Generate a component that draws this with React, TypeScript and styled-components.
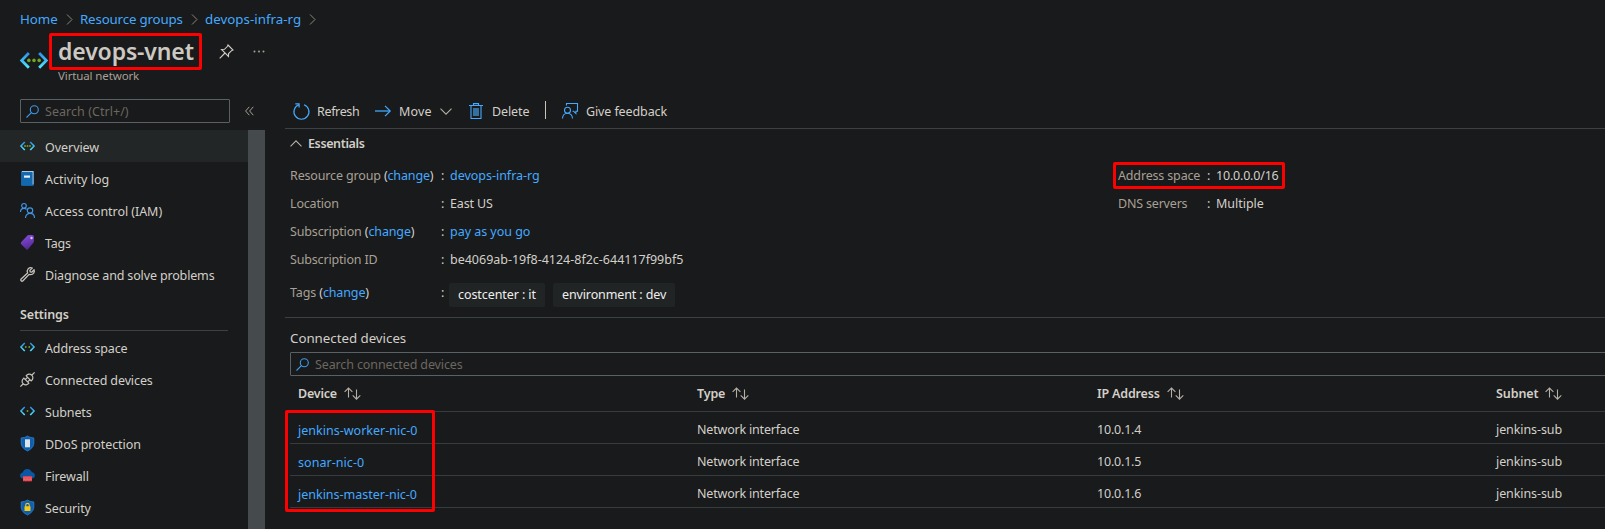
import React from "react";
import styled, { createGlobalStyle, css } from "styled-components";

const GlobalStyle = createGlobalStyle`
  * { box-sizing: border-box; }
  html, body { margin: 0; background: #181a1b; overflow: hidden; }
  body {
    font-family: "Noto Sans", "Open Sans", sans-serif;
    font-size: 12.5px;
    color: #d3cfc9;
  }
  svg { display: block; flex: none; overflow: visible; }
`;

const LINK = "#45a9ff";
const MUTED = "#a8a095";
const TRACKING = -0.05;

const Page = styled.div`
  width: 100%;
  height: 529px;
  display: flex;
  flex-direction: column;
  overflow: hidden;
  background: #181a1b;
`;

const Txt = styled.span<{ $ls?: number }>`
  white-space: nowrap;
  letter-spacing: ${(p) => (p.$ls ?? 0) + TRACKING}px;
`;

const Link = styled.a<{ $ls?: number }>`
  color: ${LINK};
  text-decoration: none;
  white-space: nowrap;
  letter-spacing: ${(p) => (p.$ls ?? 0) + TRACKING}px;
`;

const Highlight = styled.span<{ $t: number; $r: number; $b: number; $l: number }>`
  position: absolute;
  top: ${(p) => -p.$t}px;
  right: ${(p) => -p.$r}px;
  bottom: ${(p) => -p.$b}px;
  left: ${(p) => -p.$l}px;
  border: 3px solid #fe0000;
  border-radius: 2px;
  pointer-events: none;
`;

/* Header */
const Breadcrumb = styled.nav`
  display: flex;
  align-items: center;
  height: 29px;
  padding: 9px 0 0 20px;
  font-size: 13.3px;
  line-height: 20px;
`;

const Crumb = styled.span<{ $w: number }>`
  display: flex;
  align-items: center;
  justify-content: space-between;
  width: ${(p) => p.$w}px;
  margin-right: 7px;
`;

const TitleBar = styled.header`
  display: flex;
  height: 61px;
  padding: 4px 0 0 20px;
`;

const TitleIcon = styled.div`
  width: 38px;
  padding-top: 18px;
`;

const TitleLine = styled.div`
  display: flex;
  align-items: center;
  height: 36px;
`;

const Title = styled.h1`
  position: relative;
  margin: 0;
  width: 136px;
  font-size: 23px;
  font-weight: 600;
  line-height: 36px;
  letter-spacing: -0.13px;
  white-space: nowrap;
  color: #cdc8c2;
`;

const TitleActions = styled.div`
  display: flex;
  align-items: center;
  gap: 19px;
  padding: 1px 0 0 25px;
`;

const Subtitle = styled.div`
  font-size: 11.5px;
  line-height: 14px;
  color: ${MUTED};
`;

/* Body */
const Body = styled.div`
  display: flex;
  flex: 1;
  min-height: 0;
`;

const Sidebar = styled.aside`
  display: flex;
  flex-direction: column;
  width: 265px;
  flex: none;
`;

const SidebarTop = styled.div`
  display: flex;
  gap: 15px;
  height: 40px;
  padding: 9px 0 0 20px;
`;

const SearchBox = styled.div<{ $w?: number }>`
  display: flex;
  align-items: center;
  gap: 6px;
  height: 24px;
  width: ${(p) => (p.$w ? `${p.$w}px` : "auto")};
  padding-left: 5px;
  border: 1px solid #5a6164;
  border-radius: 1px;
  color: #6d675f;
  & > span { padding-top: 1px; line-height: 17px; }
`;

const Collapse = styled.div`
  padding-top: 7px;
`;

const MenuArea = styled.div`
  display: flex;
  flex: 1;
  min-height: 0;
`;

const Menu = styled.div`
  width: 248px;
`;

const Scrollbar = styled.div`
  width: 17px;
  background: #454a4d;
`;

const MenuItem = styled.div<{ $active?: boolean }>`
  display: flex;
  align-items: center;
  gap: 10px;
  height: 32px;
  padding: 2px 0 0 20px;
  color: #d3cfc9;
  ${(p) => p.$active && css`background: #222627;`}
  & > svg { margin-top: -1px; }
`;

const MenuHeading = styled.div`
  height: 41px;
  width: 208px;
  margin-left: 20px;
  padding-top: 15px;
  border-bottom: 1px solid #3c4144;
  font-weight: 600;
  line-height: 19px;
`;

const Main = styled.main`
  flex: 1;
  min-width: 0;
  padding-left: 20px;
`;

const Toolbar = styled.div`
  display: flex;
  align-items: center;
  height: 39px;
  padding: 4px 0 0 8px;
  border-bottom: 1px solid #3c4144;
`;

const Command = styled.div<{ $w: number; $gap: number }>`
  display: flex;
  align-items: center;
  gap: ${(p) => p.$gap}px;
  width: ${(p) => p.$w}px;
`;

const Separator = styled.span`
  width: 1px;
  height: 18px;
  margin: -2px 16px 0 0;
  background: #c8c3bc;
`;

const EssentialsHead = styled.div`
  display: flex;
  align-items: center;
  gap: 6px;
  height: 28px;
  padding-left: 5px;
  font-weight: 600;
`;

const Essentials = styled.section`
  display: grid;
  grid-template-columns: 828px 1fr;
  height: 161px;
  padding: 4px 0 0 5px;
  border-bottom: 1px solid #3c4144;
`;

const Prop = styled.div<{ $w: number; $h?: number }>`
  position: relative;
  display: grid;
  grid-template-columns: ${(p) => p.$w}px 9px max-content;
  align-items: center;
  width: max-content;
  height: ${(p) => p.$h ?? 28}px;
`;

const PropLabel = styled.span<{ $ls?: number }>`
  color: ${MUTED};
  white-space: nowrap;
  letter-spacing: ${(p) => (p.$ls ?? 0) + TRACKING}px;
`;

const Paren = styled.span`
  color: #d3cfc9;
`;

const TagsProp = styled(Prop)`
  height: 38px;
  align-items: start;
  padding-top: 10px;
  & > span { padding-top: 1px; line-height: 18px; }
`;

const Chips = styled.div`
  display: flex;
  gap: 8px;
  margin-left: -1px;
`;

const Chip = styled.div<{ $w: number }>`
  width: ${(p) => p.$w}px;
  height: 24px;
  padding-left: 9px;
  border-radius: 2px;
  background: #202425;
  line-height: 24px;
  color: #f0eeeb;
`;

const Devices = styled.section`
  padding: 10px 0 0 5px;
`;

const DevicesTitle = styled.div`
  height: 24px;
  font-size: 13.3px;
  line-height: 20px;
`;

const DeviceSearch = styled(SearchBox)`
  margin-right: -4px;
`;

const Row = styled.div`
  display: grid;
  grid-template-columns: 399px 400px 399px 1fr;
  align-items: start;
  height: 32px;
  padding: 8px 0 0 8px;
  border-bottom: 1px solid #363b3d;
`;

const HeadRow = styled(Row)`
  height: 36px;
  font-weight: 600;
`;

const HeadCell = styled.div`
  display: flex;
  align-items: center;
  gap: 7px;
  height: 19px;
`;

const Cell = styled.div<{ $drop?: boolean }>`
  padding-top: ${(p) => (p.$drop ? 2 : 1)}px;
  line-height: 17px;
`;

const TableBody = styled.div`
  position: relative;
`;

/* Spans the first column only, over the row borders */
const DeviceLinksHighlight = styled.span`
  position: absolute;
  top: -2px;
  bottom: -4px;
  left: -5px;
  width: 150px;
  border: 3px solid #fe0000;
  border-radius: 2px;
  pointer-events: none;
`;

/* Icons */
const CrumbChevron = () => (
  <svg width="7" height="11" viewBox="0 0 7 11" fill="none" stroke="#8d857a" strokeWidth="1">
    <path d="M1 .5l5 5-5 5" />
  </svg>
);

const Network = ({ size, dots }: { size: number; dots: number[] }) => (
  <svg width={size} height={size * 0.67} viewBox="0 0 30 20" fill="none">
    <defs>
      <linearGradient id="net" x1="0" y1="0" x2="0" y2="1">
        <stop offset="0" stopColor="#2f8fe8" />
        <stop offset="1" stopColor="#50e6ff" />
      </linearGradient>
    </defs>
    <path d="M9.500 2L1.800 10l7.700 8M20.500 2l7.700 8-7.700 8" stroke="url(#net)" strokeWidth="3" />
    {dots.map((x) => (
      <circle key={x} cx={x} cy="10" r="1.900" fill="#6fa524" />
    ))}
  </svg>
);

const Pin = () => (
  <svg width="15" height="15" viewBox="0 0 15 15" fill="none" stroke="#d3cfc9" strokeWidth="1.100">
    <path d="M9 1l5 5-1.400.600-3 3L9.500 12.500 2.500 5.500l3-.200 3-3z" />
    <path d="M6 9L.700 14.300" />
  </svg>
);

const Dots = () => (
  <svg width="13" height="3" viewBox="0 0 13 3" fill="#a8a095">
    <circle cx="1.500" cy="1.500" r="1" />
    <circle cx="6" cy="1.500" r="1" />
    <circle cx="10.500" cy="1.500" r="1" />
  </svg>
);

const Magnifier = () => (
  <svg width="13" height="13" viewBox="0 0 13 13" fill="none" stroke="#3f9ae8" strokeWidth="1.100">
    <circle cx="8.300" cy="4.700" r="4" />
    <path d="M5.400 7.600L.500 12.500" />
  </svg>
);

const DoubleChevron = () => (
  <svg width="9" height="10" viewBox="0 0 9 10" fill="none" stroke="#a8a095" strokeWidth="1">
    <path d="M4.300 .8L.6 5l3.700 4.200M8.300.8L4.600 5l3.700 4.200" />
  </svg>
);

const LogBook = () => (
  <svg width="15" height="15" viewBox="0 0 15 15">
    <path d="M1.500 0H13.500v15H2.500A1.500 1.500 0 0 1 1 13.500V.5z" fill="#0f62a8" />
    <path d="M2 .6h11V13.500" stroke="#a9cde9" strokeWidth="1.200" fill="none" />
    <path d="M1.500 1.200h10.800V14.200H1.500z" fill="#1468ae" />
    <rect x="4" y="4.500" width="6" height="2.200" fill="#e6f0f8" />
  </svg>
);

const People = () => (
  <svg width="15" height="15" viewBox="0 0 15 15" fill="none" stroke="#3f94e4" strokeWidth="1.200">
    <circle cx="4" cy="2.800" r="2.300" />
    <path d="M.5 9C.5 6.600 2 5.300 4 5.300c1.200 0 2 .4 2.600 1" />
    <circle cx="10" cy="7.500" r="2.700" />
    <path d="M5.500 15c0-2.800 1.900-4.700 4.500-4.700s4.500 1.900 4.500 4.700" />
  </svg>
);

const TagIcon = () => (
  <svg width="15" height="15" viewBox="0 0 15 15">
    <defs>
      <linearGradient id="tag" x1="0" y1="0" x2=".3" y2="1">
        <stop offset="0" stopColor="#8a4fe0" />
        <stop offset="1" stopColor="#552a96" />
      </linearGradient>
    </defs>
    <path d="M1.300 7L7 .9Q7.700.2 8.700.1L12 0q1.900.1 2 2l-.1 4.200q0 1-.7 1.700L8 14.300q-.7.800-1.500.100L1.200 9.300q-1-1.100.1-2.300z" fill="url(#tag)" />
    <circle cx="11.500" cy="3" r="1.200" fill="#d9c8f7" />
  </svg>
);

const Wrench = () => (
  <svg width="15" height="15" viewBox="0 0 15 15" fill="none" stroke="#c8c3bc" strokeWidth="1.300" strokeLinejoin="round">
    <path d="M12.300 1L9.900 3.400l.3 1.500 1.500.3L14.100 2.800c.8 2-.5 4.900-3.600 4.900-.6 0-1-.1-1.400-.3L3 13.800c-1.300 1.200-3-.5-1.900-1.800L7.600 6C6.200 3 8.900-.4 12.300 1z" />
  </svg>
);

const Plug = () => (
  <svg width="15" height="15" viewBox="0 0 15 15" fill="none" stroke="#c8c3bc" strokeWidth="1.200">
    <path d="M.4 14.600l2.600-2.600M12 3l2.600-2.600M3.200 11.800c-1.800-1.900-1.300-4.100.6-5.700l5.100 5.100c-1.600 1.900-3.800 2.400-5.700.6zM11.800 3.200c1.800 1.900 1.300 4.100-.6 5.700L6.100 3.800c1.600-1.900 3.800-2.400 5.700-.6zM5.300 7.500l1.900-1.900M7.700 9.900l1.900-1.900" />
  </svg>
);

const SHIELD = "M7.500 0c1.800 1.300 3.800 1.800 6.300 1.900v5c0 4-3 6.300-6.300 8.100C4.200 13.200 1.200 10.900 1.200 6.900v-5C3.700 1.800 5.700 1.300 7.500 0z";

const Shield = ({ children }: { children: React.ReactNode }) => (
  <svg width="15" height="15" viewBox="0 0 15 15">
    <path d={SHIELD} fill="#0f5fae" />
    <path d={SHIELD} fill="none" stroke="#2b86d8" strokeWidth=".8" />
    {children}
  </svg>
);

const FirewallIcon = () => (
  <svg width="15" height="15" viewBox="0 0 15 15">
    <path d="M3.300 10.500A3 3 0 0 1 .1 7.600c0-1.700 1.200-2.800 2.700-3C3.100 2.500 5 .9 7.300.9c2.300 0 4 1.300 4.600 3.400 1.800.2 3 1.400 3 3.100s-1.300 3.100-3.300 3.100z" fill="#0c57a4" />
    <rect x="3" y="8.200" width="9" height="5.100" fill="#e8404c" />
    <path d="M3 9.900h9M3 11.600h9M6 8.300v1.600M9 8.300v1.600M4.500 9.900v1.700M7.500 9.900v1.700M10.500 9.900v1.700M6 11.600v1.700M9 11.600v1.700" stroke="#f3858c" strokeWidth=".4" />
  </svg>
);

const Refresh = () => (
  <svg width="17" height="17" viewBox="0 0 17 17" fill="none" stroke={LINK} strokeWidth="1.200">
    <path d="M11 1.700A7.500 7.500 0 1 1 5.900 1.700" />
    <path d="M2.300.8h3.800v3.800" />
  </svg>
);

const ArrowRight = () => (
  <svg width="16" height="12" viewBox="0 0 16 12" fill="none" stroke={LINK} strokeWidth="1.200">
    <path d="M0 6h15" stroke="#3583bf" strokeWidth="1.800" />
    <path d="M10 .8L15.200 6 10 11.200" />
  </svg>
);

const Chevron = ({ up }: { up?: boolean }) => (
  <svg width="12" height="7" viewBox="0 0 12 7" fill="none" stroke="#b5afa5" strokeWidth="1.100">
    <path d={up ? "M.5 6.400L6 .8l5.500 5.600" : "M.5.6L6 6.200 11.500.6"} />
  </svg>
);

const Trash = () => (
  <svg width="14" height="16" viewBox="0 0 14 16" fill="none" stroke={LINK} strokeWidth="1.100">
    <path d="M2 2.500v13h10v-13" />
    <path d="M0 2.500h14M4.500 2.500V.6h5v1.900" />
    <rect x="4" y="5" width="6" height="8" fill="#34709f" stroke="none" />
  </svg>
);

const Feedback = () => (
  <svg width="16" height="16" viewBox="0 0 16 16" fill="none" stroke={LINK} strokeWidth="1.100">
    <circle cx="5.500" cy="7.200" r="3" />
    <path d="M.5 15.500c0-3.100 2.200-5.300 5-5.300s5 2.200 5 5.300M4.500 2.500v-2h11v7.700h-1.600v2.300l-2.400-2.300H10.500" />
  </svg>
);

const Sort = () => (
  <svg width="17" height="13" viewBox="0 0 17 13" fill="none" stroke="#b5afa5" strokeWidth="1.100">
    <path d="M4.500 10.500V1M.6 4.800L4.500 1l3.900 3.800M12.500 2.500V12M8.700 8.300l3.800 3.800 3.800-3.800" />
  </svg>
);

const general = [
  { label: "Overview", ls: 0, icon: <Network size={15} dots={[10, 15, 20]} />, active: true },
  { label: "Activity log", ls: 0.08, icon: <LogBook /> },
  { label: "Access control (IAM)", ls: 0, icon: <People /> },
  { label: "Tags", ls: -0.15, icon: <TagIcon /> },
  { label: "Diagnose and solve problems", ls: -0.1, icon: <Wrench /> },
];

const settings = [
  { label: "Address space", ls: -0.09, icon: <Network size={15} dots={[11.5, 18.5]} /> },
  { label: "Connected devices", ls: -0.06, icon: <Plug /> },
  { label: "Subnets", ls: -0.1, icon: <Network size={15} dots={[15]} /> },
  {
    label: "DDoS protection",
    ls: 0,
    icon: (
      <Shield>
        <rect x="5" y="3.300" width="5" height="8" fill="#dce3ea" />
      </Shield>
    ),
  },
  { label: "Firewall", ls: -0.06, icon: <FirewallIcon /> },
  {
    label: "Security",
    ls: -0.09,
    icon: (
      <Shield>
        <path d="M5.700 7V5.200a1.800 1.800 0 0 1 3.600 0V7" fill="none" stroke="#f0c419" strokeWidth="1.100" />
        <rect x="4.500" y="6.300" width="6" height="4.700" rx=".5" fill="#f5c914" />
      </Shield>
    ),
  },
];

const columns = [
  { label: "Device", ls: -0.15 },
  { label: "Type", ls: -0.1 },
  { label: "IP Address", ls: -0.12 },
  { label: "Subnet", ls: -0.05 },
];

const devices = [
  { name: "jenkins-worker-nic-0", ls: 0.06, ip: "10.0.1.4" },
  { name: "sonar-nic-0", ls: 0.1, ip: "10.0.1.5" },
  { name: "jenkins-master-nic-0", ls: 0.04, ip: "10.0.1.6" },
];

const ChangeLabel = ({ label, ls }: { label: string; ls: number }) => (
  <PropLabel $ls={ls}>
    {label} <Paren>(</Paren><Link $ls={ls}>change</Link><Paren>)</Paren>
  </PropLabel>
);

export default function App() {
  return (
    <Page>
      <GlobalStyle />
      <Breadcrumb>
        <Crumb $w={53}><Link>Home</Link><CrumbChevron /></Crumb>
        <Crumb $w={118}><Link $ls={-0.11}>Resource groups</Link><CrumbChevron /></Crumb>
        <Crumb $w={111}><Link $ls={0.08}>devops-infra-rg</Link><CrumbChevron /></Crumb>
      </Breadcrumb>
      <TitleBar>
        <TitleIcon><Network size={28} dots={[9.5, 15, 20.5]} /></TitleIcon>
        <div>
          <TitleLine>
            <Title>
              devops-vnet
              <Highlight $t={0} $r={8} $b={1} $l={9} />
            </Title>
            <TitleActions><Pin /><Dots /></TitleActions>
          </TitleLine>
          <Subtitle><Txt $ls={-0.07}>Virtual network</Txt></Subtitle>
        </div>
      </TitleBar>
      <Body>
        <Sidebar>
          <SidebarTop>
            <SearchBox $w={210}><Magnifier /><Txt $ls={0.1}>Search (Ctrl+/)</Txt></SearchBox>
            <Collapse><DoubleChevron /></Collapse>
          </SidebarTop>
          <MenuArea>
            <Menu>
              {general.map((m) => (
                <MenuItem key={m.label} $active={m.active}>{m.icon}<Txt $ls={m.ls}>{m.label}</Txt></MenuItem>
              ))}
              <MenuHeading><Txt $ls={-0.1}>Settings</Txt></MenuHeading>
              {settings.map((m) => (
                <MenuItem key={m.label}>{m.icon}<Txt $ls={m.ls}>{m.label}</Txt></MenuItem>
              ))}
            </Menu>
            <Scrollbar />
          </MenuArea>
        </Sidebar>
        <Main>
          <Toolbar>
            <Command $w={82} $gap={7}><Refresh /><Txt $ls={-0.3}>Refresh</Txt></Command>
            <Command $w={94} $gap={8}><ArrowRight /><Txt $ls={0.2}>Move</Txt><Chevron /></Command>
            <Command $w={76} $gap={9}><Trash /><Txt $ls={-0.06}>Delete</Txt></Command>
            <Separator />
            <Command $w={110} $gap={8}><Feedback /><Txt $ls={-0.06}>Give feedback</Txt></Command>
          </Toolbar>
          <EssentialsHead><Chevron up /><Txt $ls={-0.33}>Essentials</Txt></EssentialsHead>
          <Essentials>
            <div>
              <Prop $w={151}>
                <ChangeLabel label="Resource group" ls={-0.1} />
                <span>:</span><Link $ls={0.03}>devops-infra-rg</Link>
              </Prop>
              <Prop $w={151}>
                <PropLabel $ls={-0.12}>Location</PropLabel>
                <span>:</span><Txt $ls={-0.08}>East US</Txt>
              </Prop>
              <Prop $w={151}>
                <ChangeLabel label="Subscription" ls={-0.09} />
                <span>:</span><Link $ls={0.02}>pay as you go</Link>
              </Prop>
              <Prop $w={151}>
                <PropLabel $ls={-0.12}>Subscription ID</PropLabel>
                <span>:</span><Txt $ls={0.04}>be4069ab-19f8-4124-8f2c-644117f99bf5</Txt>
              </Prop>
              <TagsProp $w={151}>
                <ChangeLabel label="Tags" ls={-0.08} />
                <span>:</span>
                <Chips>
                  <Chip $w={96}><Txt $ls={-0.03}>costcenter : it</Txt></Chip>
                  <Chip $w={122}><Txt $ls={-0.07}>environment : dev</Txt></Chip>
                </Chips>
              </TagsProp>
            </div>
            <div>
              <Prop $w={89}>
                <PropLabel $ls={-0.11}>Address space</PropLabel>
                <span>:</span><Txt $ls={-0.15}>10.0.0.0/16</Txt>
                <Highlight $t={-1} $r={6} $b={0} $l={5} />
              </Prop>
              <Prop $w={89}>
                <PropLabel $ls={-0.14}>DNS servers</PropLabel>
                <span>:</span><Txt $ls={0.02}>Multiple</Txt>
              </Prop>
            </div>
          </Essentials>
          <Devices>
            <DevicesTitle><Txt $ls={0.03}>Connected devices</Txt></DevicesTitle>
            <DeviceSearch><Magnifier /><Txt $ls={-0.07}>Search connected devices</Txt></DeviceSearch>
            <HeadRow>
              {columns.map((c) => (
                <HeadCell key={c.label}><Txt $ls={c.ls}>{c.label}</Txt><Sort /></HeadCell>
              ))}
            </HeadRow>
            <TableBody>
              {devices.map((d) => (
                <Row key={d.name}>
                  <Cell $drop><Link $ls={d.ls}>{d.name}</Link></Cell>
                  <Cell><Txt $ls={-0.14}>Network interface</Txt></Cell>
                  <Cell><Txt $ls={-0.15}>{d.ip}</Txt></Cell>
                  <Cell><Txt $ls={-0.04}>jenkins-sub</Txt></Cell>
                </Row>
              ))}
              <DeviceLinksHighlight />
            </TableBody>
          </Devices>
        </Main>
      </Body>
    </Page>
  );
}
